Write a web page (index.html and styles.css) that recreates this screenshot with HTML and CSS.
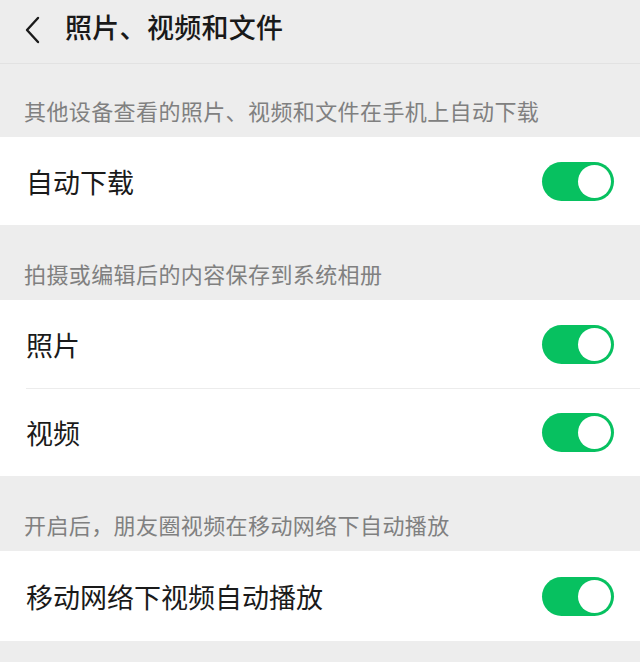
FILE: index.html
```html
<!DOCTYPE html>
<html lang="zh-CN">
<head>
<meta charset="utf-8">
<link rel="stylesheet" href="styles.css">
</head>
<body>
<div class="page">
  <header class="nav">
    <svg class="back" width="16" height="28" viewBox="0 0 16 28"><path d="M14 2 L3 14 L14 26" fill="none" stroke="#1a1a1a" stroke-width="2.4" stroke-linecap="round" stroke-linejoin="round"/></svg>
    <div class="title">照片、视频和文件</div>
  </header>
  <div class="sec sec-first">其他设备查看的照片、视频和文件在手机上自动下载</div>
  <div class="group">
    <div class="row"><span class="label">自动下载</span><span class="switch"><span class="knob"></span></span></div>
  </div>
  <div class="sec">拍摄或编辑后的内容保存到系统相册</div>
  <div class="group">
    <div class="row"><span class="label">照片</span><span class="switch"><span class="knob"></span></span></div>
    <div class="row row-div"><span class="label">视频</span><span class="switch"><span class="knob"></span></span></div>
  </div>
  <div class="sec">开启后，朋友圈视频在移动网络下自动播放</div>
  <div class="group">
    <div class="row row-last"><span class="label">移动网络下视频自动播放</span><span class="switch"><span class="knob"></span></span></div>
  </div>
</div>
</body>
</html>
```
FILE: styles.css
```css
html, body {
  margin: 0;
  padding: 0;
  background: #ededed;
}
.page {
  width: 640px;
  height: 662px;
  overflow: hidden;
  background: #ededed;
  font-family: "Noto Sans CJK SC", "Noto Sans", sans-serif;
}
.nav {
  height: 63px;
  display: flex;
  align-items: center;
  border-bottom: 1px solid #e2e2e2;
  box-sizing: content-box;
}
.back {
  margin-left: 24px;
  margin-top: -4px;
}
.title {
  margin-left: 25px;
  font-size: 27px;
  font-weight: 500;
  color: #191919;
  letter-spacing: 0.3px;
  margin-top: -10px;
}
.sec {
  height: 75px;
  box-sizing: border-box;
  display: flex;
  align-items: flex-end;
  padding: 0 24px 12px;
  font-size: 22px;
  color: #808080;
  line-height: 30px;
  letter-spacing: 0.4px;
}
.sec-first {
  height: 73px;
}
.group {
  background: #fff;
}
.row {
  height: 88px;
  display: flex;
  align-items: center;
  justify-content: space-between;
  padding: 0 26px 0 26px;
  box-sizing: border-box;
}
.row-div {
  border-top: 1px solid #ececec;
  margin-left: 26px;
  padding-left: 0;
}
.row-last {
  height: 90px;
}
.label {
  font-size: 27px;
  color: #1a1a1a;
}
.switch {
  width: 72px;
  height: 39px;
  border-radius: 20px;
  background: #07c160;
  display: flex;
  align-items: center;
  justify-content: flex-end;
  padding-right: 3px;
  box-sizing: border-box;
}
.knob {
  width: 33px;
  height: 33px;
  border-radius: 50%;
  background: #fff;
}
```
